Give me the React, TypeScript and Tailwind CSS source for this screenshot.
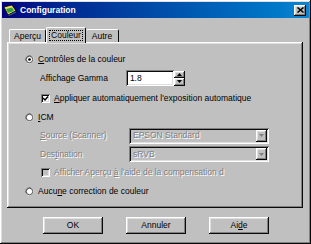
import React from 'react';

const raised =
  'shadow-[inset_-1px_-1px_#0a0a0a,inset_1px_1px_#ffffff,inset_-2px_-2px_#808080,inset_2px_2px_#dfdfdf]';
const sunken =
  'shadow-[inset_1px_1px_#808080,inset_-1px_-1px_#ffffff,inset_2px_2px_#0a0a0a,inset_-2px_-2px_#dfdfdf]';

const Radio: React.FC<{ checked?: boolean }> = ({ checked }) => (
  <svg width="9" height="9" viewBox="0 0 12 12" className="shrink-0">
    <path d="M8 1 A5.5 5.5 0 0 0 1 8" stroke="#808080" strokeWidth="1.2" fill="none" />
    <path d="M10.5 3.5 A5.5 5.5 0 0 1 3.5 10.5" stroke="#ffffff" strokeWidth="1.2" fill="none" />
    <circle cx="6" cy="6" r="4.3" fill="#ffffff" stroke="#0a0a0a" strokeWidth="0.9" />
    {checked && <circle cx="6" cy="6" r="1.8" fill="#000" />}
  </svg>
);

const Check: React.FC<{ checked?: boolean; disabled?: boolean }> = ({ checked, disabled }) => (
  <div
    className={`w-[9px] h-[9px] shrink-0 ${sunken} ${disabled ? 'bg-[#c0c0c0]' : 'bg-white'} flex items-center justify-center`}
  >
    {checked && (
      <svg width="7" height="7" viewBox="0 0 7 7">
        <path d="M1 3 L3 5 L6 1.5" stroke="#000" strokeWidth="1.4" fill="none" />
      </svg>
    )}
  </div>
);

const Tri: React.FC<{ up?: boolean; color?: string }> = ({ up, color = '#000' }) => (
  <svg width="5" height="3" viewBox="0 0 5 3">
    <path d={up ? 'M0 3 L2.5 0 L5 3 Z' : 'M0 0 L5 0 L2.5 3 Z'} fill={color} />
  </svg>
);

const Select: React.FC<{ value: string }> = ({ value }) => (
  <div className={`ml-auto w-[140px] h-[16px] ${sunken} bg-[#c0c0c0] flex items-center p-[2px]`}>
    <span className="flex-1 pl-[2px] text-[#808080] [text-shadow:1px_1px_#ffffff]">{value}</span>
    <div className={`w-[11px] h-full ${raised} bg-[#c0c0c0] flex items-center justify-center`}>
      <Tri color="#808080" />
    </div>
  </div>
);

const Disabled: React.FC<{ children: React.ReactNode }> = ({ children }) => (
  <span className="text-[#808080] [text-shadow:1px_1px_#ffffff]">{children}</span>
);

export default function App() {
  return (
    <div
      className={`w-[311px] h-[244px] bg-[#c0c0c0] ${raised} p-[2px] flex flex-col text-[8.5px] leading-none text-black`}
      style={{ fontFamily: '"Liberation Sans", Arial, sans-serif' }}
    >
      {/* Title bar */}
      <div className="h-[16px] bg-gradient-to-r from-[#000080] to-[#1084d0] flex items-center pl-[1px] pr-[3px]">
        <svg width="15" height="13" viewBox="0 0 15 13" className="mr-[2px]">
          <path d="M1 3 L9 1 L13 7 L5 11 Z" fill="#f0e060" stroke="#000" strokeWidth="0.8" />
          <path d="M3 5 L9 3.5 L11 7 L5 9 Z" fill="#30a040" />
          <path d="M5 11 L13 7 L13.5 9 L5.5 12.5 Z" fill="#4060c0" stroke="#000" strokeWidth="0.6" />
        </svg>
        <span className="text-white font-bold text-[8.5px]">Configuration</span>
        <div className={`ml-auto w-[12px] h-[11px] bg-[#c0c0c0] ${raised} flex items-center justify-center`}>
          <svg width="7" height="6" viewBox="0 0 7 6">
            <path d="M0.5 0.5 L6.5 5.5 M6.5 0.5 L0.5 5.5" stroke="#000" strokeWidth="1.5" />
          </svg>
        </div>
      </div>

      {/* Tabs + panel */}
      <div className="pl-[5px] pr-[6px] pt-[9px]">
        <div className="flex items-end h-[15px] pl-[2px] relative z-10">
          <div className="w-[37px] h-[13px] border-t border-l border-white border-r border-r-[#0a0a0a] rounded-t-[2px] flex items-center justify-center">
            Aperçu
          </div>
          <div className="w-[40px] h-[16px] -mb-px bg-[#c0c0c0] border-t border-l border-white border-r border-r-[#0a0a0a] rounded-t-[2px] flex items-center justify-center">
            <span className="outline outline-1 outline-dotted outline-black px-[1px]">Couleur</span>
          </div>
          <div className="w-[33px] h-[13px] border-t border-white border-r border-r-[#0a0a0a] rounded-t-[2px] flex items-center justify-center">
            Autre
          </div>
        </div>
        <div className={`h-[166px] ${raised} pt-[8px] pl-[18px] pr-[34px]`}>
          <div className="h-[18px] flex items-center gap-[4px]">
            <Radio checked />
            <span>
              <u>C</u>ontrôles de la couleur
            </span>
          </div>
          <div className="h-[20px] flex items-center pl-[15px]">
            <span>Affichage Gamma</span>
            <div className="ml-[18px] flex items-center">
              <div className={`w-[48px] h-[16px] bg-white ${sunken} flex items-center pl-[4px]`}>1.8</div>
              <div className="flex flex-col w-[11px] h-[15px]">
                <div className={`flex-1 ${raised} bg-[#c0c0c0] flex items-center justify-center`}>
                  <Tri up />
                </div>
                <div className={`flex-1 ${raised} bg-[#c0c0c0] flex items-center justify-center`}>
                  <Tri />
                </div>
              </div>
            </div>
          </div>
          <div className="h-[20px] flex items-center pl-[16px] gap-[4px]">
            <Check checked />
            <span>
              <u>A</u>ppliquer automatiquement l'exposition automatique
            </span>
          </div>
          <div className="h-[18px] flex items-center gap-[4px]">
            <Radio />
            <span>
              <u>I</u>CM
            </span>
          </div>
          <div className="h-[19px] flex items-center pl-[15px]">
            <Disabled>
              <u>S</u>ource (Scanner)
            </Disabled>
            <Select value="EPSON Standard" />
          </div>
          <div className="h-[18px] flex items-center pl-[15px]">
            <Disabled>
              Des<u>t</u>ination
            </Disabled>
            <Select value="sRVB" />
          </div>
          <div className="h-[18px] flex items-center pl-[16px] gap-[4px]">
            <Check disabled />
            <Disabled>
              Afficher Aperçu <u>à</u> l'aide de la compensation d
            </Disabled>
          </div>
          <div className="h-[20px] flex items-center gap-[4px]">
            <Radio />
            <span>
              Aucu<u>n</u>e correction de couleur
            </span>
          </div>
        </div>
      </div>

      {/* Buttons */}
      <div className="flex pt-[9px] pl-[41px] gap-[23px]">
        <div className={`w-[60px] h-[17px] ${raised} shadow-[inset_-1px_-1px_#0a0a0a,inset_1px_1px_#0a0a0a,inset_-2px_-2px_#0a0a0a,inset_2px_2px_#ffffff,inset_-3px_-3px_#808080] flex items-center justify-center`}>
          OK
        </div>
        <div className={`w-[60px] h-[17px] ${raised} flex items-center justify-center`}>Annuler</div>
        <div className={`w-[60px] h-[17px] ${raised} flex items-center justify-center`}>
          Ai<u>d</u>e
        </div>
      </div>
    </div>
  );
}
